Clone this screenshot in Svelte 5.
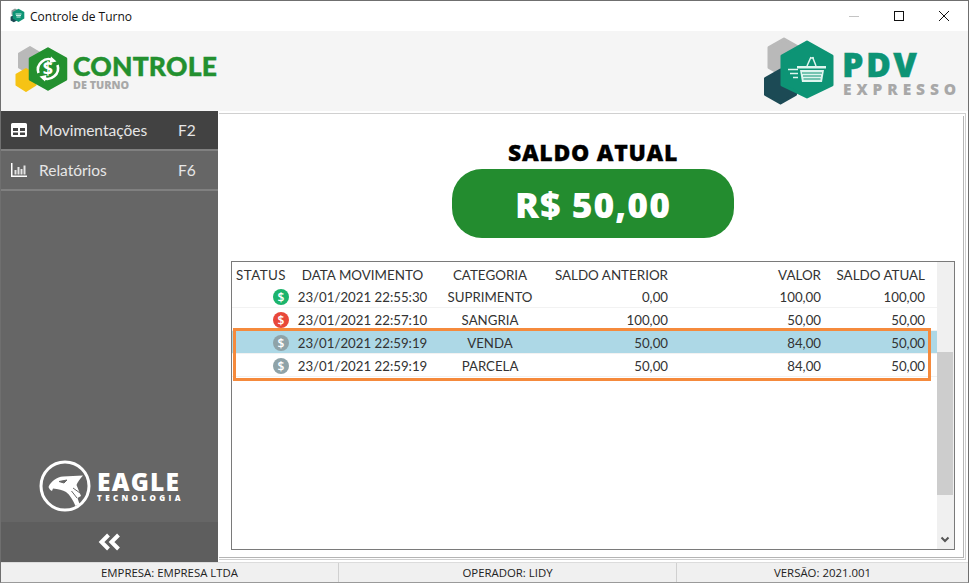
<script>
  const rows = [
    { c: '#1cb46c', d: '23/01/2021 22:55:30', cat: 'SUPRIMENTO', a: '0,00', v: '100,00', s: '100,00' },
    { c: '#e8483a', d: '23/01/2021 22:57:10', cat: 'SANGRIA', a: '100,00', v: '50,00', s: '50,00' },
    { c: '#8fa3a8', d: '23/01/2021 22:59:19', cat: 'VENDA', a: '50,00', v: '84,00', s: '50,00', sel: true },
    { c: '#8fa3a8', d: '23/01/2021 22:59:19', cat: 'PARCELA', a: '50,00', v: '84,00', s: '50,00' }
  ];
</script>

<div class="window">
  <div class="titlebar">
    <svg class="appicon" width="16" height="16" viewBox="0 0 16 16">
      <path d="M5 0.500l3.500 2v4l-3.500 2-3.500-2v-4z" fill="#8f9a9a"/>
      <path d="M3.800 7l3.200 1.800v3.700l-3.200 1.800-3.200-1.800V8.800z" fill="#1c4a55"/>
      <path d="M8.500 0.800l5.800 3.300v6.500l-5.800 3.300-5.800-3.300V4.100z" fill="#0d9475"/>
      <path d="M5.500 6h6M6 7.500h5M6.500 9h4" stroke="#cfeee6" stroke-width="1"/>
    </svg>
    <span class="title">Controle de Turno</span>
    <div class="winbtns">
      <svg width="12" height="12" viewBox="0 0 12 12"><path d="M1 6.500h10" stroke="#c4c4c4" fill="none"/></svg>
      <svg width="12" height="12" viewBox="0 0 12 12"><rect x="1.500" y="1.500" width="9" height="9" stroke="#111" fill="none"/></svg>
      <svg width="12" height="12" viewBox="0 0 12 12"><path d="M1 1l10 10M11 1L1 11" stroke="#111" fill="none"/></svg>
    </div>
  </div>

  <header class="header">
    <div class="logo-left">
      <svg width="58" height="50" viewBox="0 0 58 50">
        <path d="M16 1l11 6.500v14L16 28 5 21.500v-14z" fill="#b9b9b9" stroke="#b9b9b9" stroke-width="2" stroke-linejoin="round"/>
        <path d="M12 23l9.500 5.500v10.500L12 45 2.500 39V28.500z" fill="#f6c315" stroke="#f6c315" stroke-width="2" stroke-linejoin="round"/>
        <path d="M34 2.500l18 10.200v20.600L34 43.500 16 33.300V12.700z" fill="#23902f" stroke="#23902f" stroke-width="2.500" stroke-linejoin="round"/>
        <path d="M24.500 27a10.500 10.500 0 0 1 15-12.500M43.500 19a10.500 10.500 0 0 1-15 12.500" fill="none" stroke="#fff" stroke-width="2.600"/>
        <path d="M37 10.500l5.500 5-7 1.500zM31 35.500l-5.500-5 7-1.500z" fill="#fff"/>
        <text x="34" y="29" text-anchor="middle" class="dollar">$</text>
      </svg>
      <div class="lt">
        <div class="controle">CONTROLE</div>
        <div class="deturno">DE TURNO</div>
      </div>
    </div>
    <div class="logo-right">
      <svg width="72" height="68" viewBox="0 0 72 68">
        <path d="M22 2l15 8.500v20L22 39 7 30.500v-20z" fill="#b9b9b9" stroke="#b9b9b9" stroke-width="3" stroke-linejoin="round"/>
        <path d="M18.500 33l15 8.500v16L18.500 66l-15-8.500v-16z" fill="#1c4a55" stroke="#1c4a55" stroke-width="3" stroke-linejoin="round"/>
        <path d="M45 5l25 14v29L45 60 20 48V19z" fill="#0d9475" stroke="#0d9475" stroke-width="3" stroke-linejoin="round"/>
        <path d="M35 29h29v2.500H35z" fill="#dff5ef"/>
        <path d="M38 33h24l-2 12H40z" fill="#dff5ef"/>
        <path d="M40 36h20M41 39h18M41.500 42h17" stroke="#0d9475" stroke-width="1.200"/>
        <path d="M45 29l4-9M54 29l-3.500-9M48 21h4" fill="none" stroke="#dff5ef" stroke-width="1.500"/>
        <path d="M26 32.500h10M28 36.500h8M31 40.500h5" stroke="#dff5ef" stroke-width="1.300"/>
      </svg>
      <div class="rt">
        <div class="pdv">PDV</div>
        <div class="expresso">EXPRESSO</div>
      </div>
    </div>
  </header>

  <div class="middle">
    <aside class="sidebar">
      <div class="menuitem active">
        <svg width="16" height="14" viewBox="0 0 16 14"><path fill-rule="evenodd" d="M1.500 0h13A1.500 1.500 0 0 1 16 1.500v11a1.500 1.500 0 0 1-1.500 1.500h-13A1.500 1.500 0 0 1 0 12.500v-11A1.500 1.500 0 0 1 1.500 0zM2 5v3h5V5zm7 0v3h5V5zM2 9.500v2.500h5V9.500zm7 0v2.500h5V9.500z" fill="#fff"/></svg>
        <span class="label">Movimentações</span><span class="key">F2</span>
      </div>
      <div class="menuitem">
        <svg width="16" height="14" viewBox="0 0 16 14"><path d="M0 0h1.500v12.500H16V14H0z" fill="#fff"/><path d="M3.500 7h2v4.500h-2zM6.500 4h2v7.500h-2zM9.500 6h2v5.500h-2zM12.500 2.500h2v9h-2z" fill="#e4e4e4"/></svg>
        <span class="label">Relatórios</span><span class="key">F6</span>
      </div>
      <div class="spacer"></div>
      <div class="eagle">
        <svg width="52" height="52" viewBox="0 0 52 52">
          <circle cx="26" cy="26" r="24" fill="none" stroke="#fff" stroke-width="3"/>
          <path d="M9.500 27C12 21 18 17 24 16.500L44 15.500C41 19 38.500 22 37.500 25L42 36L38.500 38L40.500 44L36.500 46C34 40 31 35 27 32C24 30 19 29 14 28.500L13 31C11 30 10 28.500 9.500 27z" fill="#fff"/>
          <path d="M20 21.500L28 20L25 23zM34 28L41 33M32.500 31L38 38" fill="#666" stroke="#666" stroke-width="1"/>
        </svg>
        <div class="et">
          <div class="eagle-name">EAGLE</div>
          <div class="eagle-sub">TECNOLOGIA</div>
        </div>
      </div>
      <div class="collapse">
        <svg width="24" height="18" viewBox="0 0 24 18"><path d="M10.500 2L3.500 9l7 7M20.500 2l-7 7 7 7" fill="none" stroke="#fff" stroke-width="4"/></svg>
      </div>
    </aside>

    <div class="frame">
      <main class="content">
        <div class="saldo-title">SALDO ATUAL</div>
        <div class="saldo-value">R$ 50,00</div>
        <section class="grid">
          <div class="tablewrap">
            <div class="row head">
              <div class="c status">STATUS</div>
              <div class="c data">DATA MOVIMENTO</div>
              <div class="c cat">CATEGORIA</div>
              <div class="c ant">SALDO ANTERIOR</div>
              <div class="c val">VALOR</div>
              <div class="c atual">SALDO ATUAL</div>
            </div>
            {#each rows as r}
              <div class="row body" class:sel={r.sel}>
                <div class="c status ic">
                  <span class="dot" style="background:{r.c}">$</span>
                </div>
                <div class="c data">{r.d}</div>
                <div class="c cat">{r.cat}</div>
                <div class="c ant">{r.a}</div>
                <div class="c val">{r.v}</div>
                <div class="c atual">{r.s}</div>
              </div>
            {/each}
            <div class="highlight"></div>
          </div>
          <div class="scroll">
            <div class="thumb"></div>
            <svg class="arrow" width="10" height="8" viewBox="0 0 10 8"><path d="M1.500 1.500L5 5l3.500-3.500" fill="none" stroke="#555" stroke-width="2"/></svg>
          </div>
        </section>
      </main>
    </div>
  </div>

  <footer class="status-bar">
    <div class="s s1">EMPRESA: EMPRESA LTDA</div>
    <div class="s s2">OPERADOR: LIDY</div>
    <div class="s s3">VERSÃO: 2021.001</div>
  </footer>
</div>

<style>
  :global(body) { margin: 0; background: #fff; }
  .window {
    width: 969px; height: 583px; box-sizing: border-box;
    border: 1px solid #6f6f6f; border-bottom-color: #9a9a9a;
    display: flex; flex-direction: column; overflow: hidden;
    font-family: Lato, "Liberation Sans", sans-serif; color: #222; background: #fff;
  }
  .titlebar {
    height: 30px; flex: none; display: flex; align-items: center; padding-left: 9px; background: #fff;
  }
  .title { font: 12px "Open Sans", "Liberation Sans", sans-serif; margin-left: 4px; color: #111; }
  .winbtns { margin-left: auto; display: flex; align-items: center; gap: 33px; padding-right: 18px; }
  .header {
    height: 80px; flex: none; background: #f5f5f5; display: flex; align-items: center; justify-content: space-between;
  }
  .logo-left { display: flex; align-items: center; margin-left: 13px; }
  .dollar { font: 700 18px "Open Sans", sans-serif; fill: #fff; }
  .lt { margin-left: 1px; margin-top: 1px; }
  .controle { font: 900 26.500px/26px Lato, sans-serif; color: #23902f; letter-spacing: 0.2px; -webkit-text-stroke: 0.4px #23902f; }
  .deturno { font: 800 10.800px/12px "Open Sans", sans-serif; color: #a8a8a8; }
  .logo-right { display: flex; align-items: center; margin-right: 7px; }
  .rt { margin-left: 8px; margin-top: 5px; }
  .pdv { font: 800 34px/30px "Open Sans", sans-serif; color: #0d9475; letter-spacing: 2.400px; -webkit-text-stroke: 0.4px #0d9475; }
  .expresso { font: 800 15.500px/18px "Open Sans", sans-serif; color: #a8a8a8; letter-spacing: 4.900px; margin-top: 1px; padding-left: 1px; }
  .middle { flex: 1; display: flex; min-height: 0; }
  .sidebar {
    width: 217px; flex: none; background: #666; display: flex; flex-direction: column;
  }
  .menuitem {
    height: 38px; flex: none; display: flex; align-items: center; padding-left: 10px; color: #e6e6e6;
    border-bottom: 2px solid #808080; font: 15.500px Lato, sans-serif; background: #666;
  }
  .menuitem.active { background: #424242; }
  .label { margin-left: 12px; width: 139px; }
  .spacer { flex: 1; }
  .eagle { display: flex; align-items: center; margin: 0 0 10px 38px; }
  .et { margin-left: 6px; color: #fff; }
  .eagle-name { font: 800 24.500px/23px "Open Sans", sans-serif; letter-spacing: 1.200px; }
  .eagle-sub { font: 800 8px/10px "Open Sans", sans-serif; letter-spacing: 3.400px; }
  .collapse { height: 40px; flex: none; background: #5e5e5e; display: flex; align-items: center; justify-content: center; }
  .frame {
    flex: 1; min-width: 0; margin: 2px 2px 2px 1px; border: 1px solid #d0d0d0; border-left: 0;
    padding: 2px 1px 1px 0; display: flex;
  }
  .content {
    flex: 1; border-right: 1px solid #b4b4b4; border-bottom: 1px solid #b4b4b4;
    background: #fff; display: flex; flex-direction: column; align-items: center; padding: 0 8px 7px 12px; min-width: 0;
  }
  .saldo-title { font: 800 23px/28px "Open Sans", sans-serif; color: #000; margin-top: 22px; letter-spacing: 0.700px; -webkit-text-stroke: 0.3px #000; }
  .saldo-value {
    width: 282px; height: 69px; border-radius: 30px; background: #238c2f; color: #fff; margin-top: 3px;
    display: flex; align-items: center; justify-content: center; font: 800 35.500px "Open Sans", sans-serif; letter-spacing: 1px;
  }
  .grid {
    align-self: stretch; flex: 1; margin-top: 23px; border: 1px solid #7a7a7a; display: flex; min-height: 0; background: #fff;
  }
  .tablewrap { flex: 1; position: relative; min-width: 0; }
  .row { display: flex; align-items: center; height: 23px; box-sizing: border-box; padding-top: 2px; font: 13.250px Lato, sans-serif; color: #333; }
  .row.head { font-size: 13.400px; }
  .row.head .status { letter-spacing: 0.450px; }
  .row.body { border-bottom: 1px solid #f2f2f2; }
  .row.sel { background: #add8e6; }
  .c { flex: none; box-sizing: border-box; white-space: nowrap; }
  .status { width: 58px; padding-left: 4px; }
  .ic { display: flex; justify-content: flex-end; padding-right: 1px; }
  .dot {
    width: 16px; height: 16px; border-radius: 50%; color: #fff; display: flex; align-items: center; justify-content: center;
    font: 600 12px "Open Sans", sans-serif;
  }
  .data { width: 145px; text-align: center; }
  .cat { width: 110px; text-align: center; }
  .ant { width: 123px; text-align: right; }
  .val { width: 153px; text-align: right; }
  .atual { width: 104px; text-align: right; }
  .highlight {
    position: absolute; left: 1px; top: 66px; width: 698px; height: 53px; box-sizing: border-box; border: 3px solid #f58a3c; pointer-events: none;
  }
  .scroll {
    width: 17px; flex: none; background: #f0f0f0; position: relative;
  }
  .thumb { position: absolute; left: 0; width: 16px; top: 90px; height: 143px; background: #cdcdcd; }
  .arrow { position: absolute; left: 3px; bottom: 5px; }
  .status-bar {
    height: 19px; flex: none; background: #f0f0f0; border-top: 1px solid #dcdcdc; display: flex; font: 11.400px "Open Sans", sans-serif; color: #222; align-items: center;
  }
  .s { text-align: center; box-sizing: border-box; border-right: 1px solid #d0d0d0; height: 100%; display: flex; align-items: center; justify-content: center; }
  .s1 { width: 338px; }
  .s2 { width: 338px; }
  .s3 { flex: 1; border: 0; }
</style>
